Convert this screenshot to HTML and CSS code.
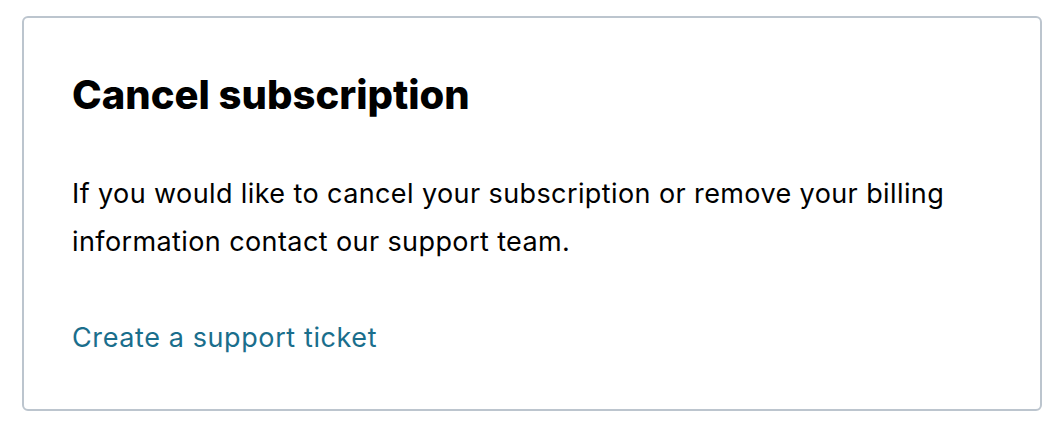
FILE: index.html
```html
<!DOCTYPE html>
<html>
<head>
<meta charset="utf-8">
<link rel="stylesheet" href="styles.css">
</head>
<body>
<div class="card">
  <h2 class="title">Cancel subscription</h2>
  <p class="text">If you would like to cancel your subscription or remove your billing information contact our support team.</p>
  <a class="link" href="#">Create a support ticket</a>
</div>
</body>
</html>
```
FILE: styles.css
```css
html, body { margin: 0; padding: 0; background: #fff; }
body { padding: 16px 12px 0 22px; font-family: Inter, "Noto Sans", sans-serif; color: #000; }
.card {
  box-sizing: border-box;
  width: 1020px;
  height: 395px;
  border: 2px solid #bcc5ce;
  border-radius: 6px;
  padding: 53px 48px 0 48px;
}
.title { margin: 0; font-size: 40px; font-weight: 800; line-height: 48px; letter-spacing: 0; }
.text { margin: 51px 0 0 0; font-size: 27px; line-height: 48px; letter-spacing: 0.4px; }
.link { display: block; margin-top: 48px; font-size: 27px; line-height: 48px; letter-spacing: 0.6px; color: #1a6e8c; text-decoration: none; }
```
